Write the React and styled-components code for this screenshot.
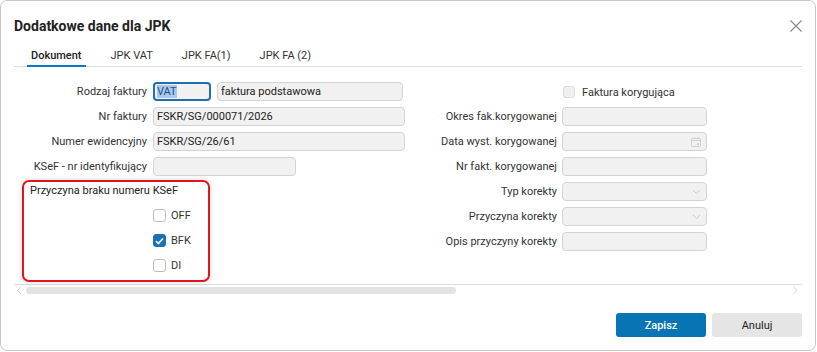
import React from "react";
import styled, { createGlobalStyle } from "styled-components";

const Global = createGlobalStyle`
  html, body { margin: 0; padding: 0; background: #ffffff; }
  body { font-family: Roboto, "Noto Sans", Arial, sans-serif; color: #222; }
  * { box-sizing: border-box; }
`;

const Dialog = styled.div`
  width: 816px;
  height: 351px;
  border: 1px solid #c8c8c8;
  border-radius: 7px;
  background: #fff;
  padding: 0 13px;
  display: flex;
  flex-direction: column;
`;

const Header = styled.div`
  display: flex;
  align-items: center;
  justify-content: space-between;
  padding-top: 16px;
  height: 34px;
`;

const Title = styled.h1`
  margin: 0;
  font-size: 14px;
  line-height: 18px;
  font-weight: 700;
  color: #222;
`;

const CloseBtn = styled.button`
  border: 0;
  background: none;
  padding: 0;
  width: 13px;
  height: 13px;
  margin-right: 0;
  display: flex;
  align-items: center;
  justify-content: center;
  cursor: pointer;
`;

const TabBar = styled.div`
  display: flex;
  gap: 21px;
  margin-top: 13px;
  padding-left: 13px;
  border-bottom: 1px solid #dedede;
`;

const Tab = styled.div`
  font-size: 11px;
  line-height: 16px;
  padding: 0 4px 1px;
  border-bottom: 2px solid ${(p) => (p.$active ? "#0a78c2" : "transparent")};
  color: ${(p) => (p.$active ? "#222" : "#333")};
  font-weight: ${(p) => (p.$active ? 500 : 400)};
  margin-bottom: -1px;
`;

const FormArea = styled.div`
  display: flex;
  padding-top: 15px;
  height: 218px;
  border-bottom: 1px solid #dedede;
`;

const LeftCol = styled.div`
  width: 396px;
  display: flex;
  flex-direction: column;
`;

const RightCol = styled.div`
  display: flex;
  flex-direction: column;
  gap: 6px;
`;

const FieldList = styled.div`
  display: flex;
  flex-direction: column;
  gap: 6px;
`;

const Row = styled.div`
  display: flex;
  align-items: center;
  height: 19px;
  gap: ${(p) => p.$gap || 6}px;
`;

const Label = styled.label`
  width: ${(p) => p.$w}px;
  text-align: right;
  font-size: 11px;
  line-height: 14px;
  color: #333;
  white-space: nowrap;
  flex-shrink: 0;
`;

const Input = styled.div`
  position: relative;
  width: ${(p) => p.$w}px;
  height: 19px;
  background: #f1f1f1;
  border: 1px solid #d3d3d3;
  border-radius: 4px;
  font-size: 11px;
  line-height: 17px;
  padding-left: 3px;
  color: #222;
  white-space: nowrap;
  overflow: hidden;
  flex-shrink: 0;
`;

const FocusInput = styled(Input)`
  border: 2px solid #1f6fb2;
  line-height: 15px;
  padding-left: 2px;
`;

const Selected = styled.span`
  background: #a9c9ec;
  color: #1d4f8c;
`;

const FieldIcon = styled.span`
  position: absolute;
  right: 5px;
  top: 50%;
  transform: translateY(-50%);
  display: flex;
`;

const Group = styled.fieldset`
  margin: 4px 0 0 8px;
  padding: 2px 6px 5px;
  width: 188px;
  height: 102px;
  border: 2px solid #e5141c;
  border-radius: 7px;
  box-shadow: 0 0 6px rgba(0, 0, 0, 0.14);
  display: flex;
  flex-direction: column;
`;

const GroupTitle = styled.div`
  font-size: 11px;
  line-height: 14px;
  color: #222;
  margin-bottom: 8px;
`;

const Options = styled.div`
  display: flex;
  flex-direction: column;
  gap: 6px;
  padding-left: 123px;
`;

const Option = styled.label`
  display: flex;
  align-items: center;
  gap: 5px;
  height: 19px;
  font-size: 11px;
  color: #333;
`;

const Box = styled.span`
  width: ${(p) => (p.$disabled ? 12 : 13)}px;
  height: ${(p) => (p.$disabled ? 12 : 13)}px;
  border-radius: 3px;
  border: 1px solid ${(p) => (p.$checked ? "#1a71b4" : p.$disabled ? "#dcdcdc" : "#bdbdbd")};
  background: ${(p) => (p.$checked ? "#1a71b4" : p.$disabled ? "#efefef" : "#fff")};
  display: flex;
  align-items: center;
  justify-content: center;
  flex-shrink: 0;
`;

const CheckRow = styled.label`
  display: flex;
  align-items: center;
  height: 19px;
  gap: 7px;
  padding-left: 153px;
  padding-top: 1px;
  font-size: 11px;
  color: #333;
`;

const ScrollBar = styled.div`
  display: flex;
  align-items: center;
  height: 11px;
  padding: 0 3px 0 2px;
  gap: 3px;
`;

const Track = styled.div`
  flex: 1;
  height: 7px;
`;

const Thumb = styled.div`
  width: 430px;
  height: 7px;
  border-radius: 4px;
  background: #e3e3e3;
`;

const Footer = styled.div`
  display: flex;
  justify-content: flex-end;
  gap: 6px;
  margin-top: 17px;
`;

const Button = styled.button`
  width: 90px;
  height: 24px;
  border: 0;
  border-radius: 3px;
  font-family: Roboto, Arial, sans-serif;
  font-size: 11px;
  font-weight: ${(p) => (p.$primary ? 500 : 400)};
  background: ${(p) => (p.$primary ? "#0874b3" : "#e5e5e5")};
  color: ${(p) => (p.$primary ? "#fff" : "#222")};
  cursor: pointer;
`;

const Chevron = ({ dir = "down", color = "#c9c9c9" }) => {
  const d = {
    down: "M1 1.5 L4.5 5 L8 1.5",
    left: "M5 1 L1.5 4.5 L5 8",
    right: "M1.5 1 L5 4.5 L1.5 8",
  }[dir];
  const size = dir === "down" ? [9, 7] : [7, 9];
  return (
    <svg width={size[0]} height={size[1]} viewBox={`0 0 ${size[0]} ${size[1]}`}>
      <path d={d} fill="none" stroke={color} strokeWidth="1" />
    </svg>
  );
};

const Calendar = () => (
  <svg width="10" height="10" viewBox="0 0 10 10">
    <rect x="0.5" y="1.5" width="9" height="8" rx="1" fill="none" stroke="#cfcfcf" />
    <line x1="0.5" y1="3.5" x2="9.5" y2="3.5" stroke="#cfcfcf" />
    <line x1="3" y1="0" x2="3" y2="2" stroke="#cfcfcf" />
    <line x1="7" y1="0" x2="7" y2="2" stroke="#cfcfcf" />
    <rect x="6" y="6" width="2" height="2" fill="#cfcfcf" />
  </svg>
);

const Check = () => (
  <svg width="9" height="8" viewBox="0 0 9 8">
    <path d="M1 4.2 L3.4 6.5 L8 1.5" fill="none" stroke="#fff" strokeWidth="1.6" />
  </svg>
);

const leftFields = [
  { label: "Nr faktury", value: "FSKR/SG/000071/2026", w: 252 },
  { label: "Numer ewidencyjny", value: "FSKR/SG/26/61", w: 252 },
  { label: "KSeF - nr identyfikujący", value: "", w: 143 },
];

const rightFields = [
  { label: "Okres fak.korygowanej" },
  { label: "Data wyst. korygowanej", icon: <Calendar /> },
  { label: "Nr fakt. korygowanej" },
  { label: "Typ korekty", icon: <Chevron /> },
  { label: "Przyczyna korekty", icon: <Chevron /> },
  { label: "Opis przyczyny korekty" },
];

const options = [
  { label: "OFF", checked: false },
  { label: "BFK", checked: true },
  { label: "DI", checked: false },
];

export default function App() {
  return (
    <>
      <Global />
      <Dialog>
        <Header>
          <Title>Dodatkowe dane dla JPK</Title>
          <CloseBtn aria-label="Zamknij">
            <svg width="12" height="12" viewBox="0 0 12 12">
              <path d="M0.5 0.5 L11.5 11.5 M11.5 0.5 L0.5 11.5" stroke="#8a8a8a" strokeWidth="1.2" />
            </svg>
          </CloseBtn>
        </Header>
        <TabBar>
          <Tab $active>Dokument</Tab>
          <Tab>JPK VAT</Tab>
          <Tab>JPK FA(1)</Tab>
          <Tab>JPK FA (2)</Tab>
        </TabBar>
        <FormArea>
          <LeftCol>
            <FieldList>
              <Row>
                <Label $w={133}>Rodzaj faktury</Label>
                <FocusInput $w={58}>
                  <Selected>VAT</Selected>
                </FocusInput>
                <Input $w={186}>faktura podstawowa</Input>
              </Row>
              {leftFields.map((f) => (
                <Row key={f.label}>
                  <Label $w={133}>{f.label}</Label>
                  <Input $w={f.w}>{f.value}</Input>
                </Row>
              ))}
            </FieldList>
            <Group>
              <GroupTitle>Przyczyna braku numeru KSeF</GroupTitle>
              <Options>
                {options.map((o) => (
                  <Option key={o.label}>
                    <Box $checked={o.checked}>{o.checked && <Check />}</Box>
                    {o.label}
                  </Option>
                ))}
              </Options>
            </Group>
          </LeftCol>
          <RightCol>
            <CheckRow>
              <Box $disabled />
              Faktura korygująca
            </CheckRow>
            {rightFields.map((f) => (
              <Row key={f.label} $gap={5}>
                <Label $w={147}>{f.label}</Label>
                <Input $w={145}>{f.icon && <FieldIcon>{f.icon}</FieldIcon>}</Input>
              </Row>
            ))}
          </RightCol>
        </FormArea>
        <ScrollBar>
          <Chevron dir="left" color="#d0d0d0" />
          <Track>
            <Thumb />
          </Track>
          <Chevron dir="right" color="#d0d0d0" />
        </ScrollBar>
        <Footer>
          <Button $primary>Zapisz</Button>
          <Button>Anuluj</Button>
        </Footer>
      </Dialog>
    </>
  );
}
